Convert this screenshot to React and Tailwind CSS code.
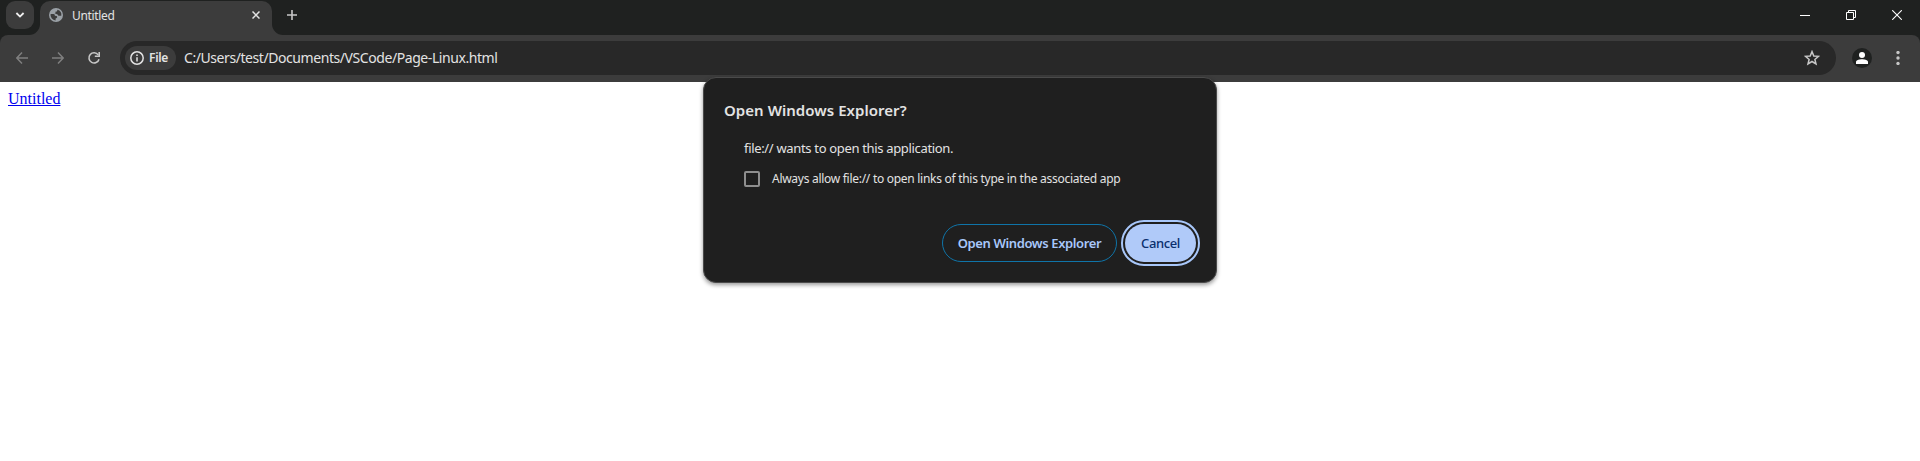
import React from "react";

function GlobeIcon() {
  return (
    <svg className="h-[14px] w-[14px] shrink-0" viewBox="0 0 14 14">
      <circle cx="7" cy="7" r="7" fill="#9aa0a6" />
      <path
        d="M1.6 6 L4.4 6 C5.6 6 6 6.8 5.8 7.8 L7.4 8 C8.4 8.2 8.4 9.6 7.6 10 L6.6 10.6 V12.4 A5.4 5.4 0 0 1 1.6 6 Z M8.4 1.8 L8 3.4 H6.6 V4.6 L5.6 5.2 L8.6 6.4 L9.4 7.8 H12.3 A5.4 5.4 0 0 0 8.4 1.8 Z"
        fill="#3c3c3c"
      />
    </svg>
  );
}

function TabStrip() {
  return (
    <div className="flex h-[35px] items-start bg-[#1f2120]">
      <button className="ml-[6px] mt-px flex h-7 w-7 items-center justify-center rounded-[9px] bg-[#3c3c3c]">
        <svg className="h-2 w-[10px]" viewBox="0 0 10 8" fill="none" stroke="#f0f0f0" strokeWidth="1.8">
          <path d="M1.4 2 L5 5.6 L8.6 2" />
        </svg>
      </button>
      <div className="mt-px flex h-[34px]">
        <svg className="h-[34px] w-[6px] overflow-visible" viewBox="0 0 6 34">
          <path d="M6 23 V34 H-5 A11 11 0 0 0 6 23 Z" fill="#3c3c3c" />
        </svg>
        <div className="flex w-[232px] items-start rounded-t-[10px] bg-[#3c3c3c] pl-[9px] pr-3 pt-[7px]">
          <GlobeIcon />
          <span className="ml-[9px] flex-1 text-[12px] leading-[16px] tracking-[-0.33px] text-[#e3e3e3]">Untitled</span>
          <svg className="mt-[3px] h-2 w-2" viewBox="0 0 8 8" stroke="#e3e3e3" strokeWidth="1.5">
            <path d="M0.5 0.5 L7.5 7.5 M7.5 0.5 L0.5 7.5" />
          </svg>
        </div>
        <svg className="h-[34px] w-[11px]" viewBox="0 0 11 34">
          <path d="M0 23 V34 H11 A11 11 0 0 1 0 23 Z" fill="#3c3c3c" />
        </svg>
      </div>
      <svg className="ml-1 mt-[10px] h-[10px] w-[10px]" viewBox="0 0 10 10" stroke="#c7c7c7" strokeWidth="1.6">
        <path d="M5 0 V10 M0 5 H10" />
      </svg>
      <div className="ml-auto mr-[18px] mt-[10px] flex gap-9">
        <svg className="h-[10px] w-[10px]" viewBox="0 0 10 10" fill="#fff">
          <rect y="5" width="10" height="1" />
        </svg>
        <svg className="h-[10px] w-[10px]" viewBox="0 0 10 10" fill="none" stroke="#fff">
          <path d="M0.5 2.5 H7.5 V9.5 H0.5 Z M2.5 2.5 V0.5 H9.5 V7.5 H7.5" />
        </svg>
        <svg className="h-[10px] w-[10px]" viewBox="0 0 10 10" stroke="#fff" strokeWidth="1.1">
          <path d="M0.2 0.2 L9.8 9.8 M9.8 0.2 L0.2 9.8" />
        </svg>
      </div>
    </div>
  );
}

function Toolbar() {
  return (
    <div className="bg-[#1f2120]">
      <div className="flex h-[47px] items-center rounded-t-[8px] bg-[#3c3c3c] pb-px pl-4 pr-5">
        <svg className="h-3 w-3" viewBox="0 0 12 12" fill="none" stroke="#7f7f7f" strokeWidth="1.5">
          <path d="M12 6 H1 M6 0.6 L0.8 6 L6 11.4" />
        </svg>
        <svg className="ml-6 h-3 w-3" viewBox="0 0 12 12" fill="none" stroke="#7f7f7f" strokeWidth="1.5">
          <path d="M0 6 H11 M6 0.6 L11.2 6 L6 11.4" />
        </svg>
        <svg className="ml-6 h-3 w-3 overflow-visible" viewBox="0 0 12 12" fill="none" stroke="#c7c7c7" strokeWidth="1.6">
          <path d="M10.2 2.9 A5.1 5.1 0 1 0 11 7.2" />
          <path d="M11.2 0 V4.3 H6.8" />
        </svg>
        <div className="ml-5 flex h-[34px] flex-1 items-center rounded-full bg-[#282828] pl-[5px] pr-4">
          <div className="flex h-6 w-[51px] items-center rounded-full bg-[#3c3c3c] pl-[5px]">
            <svg className="h-[14px] w-[14px] shrink-0" viewBox="0 0 14 14" fill="none" stroke="#e3e3e3" strokeWidth="1.5">
              <circle cx="7" cy="7" r="6.2" />
              <path d="M7 6.2 V10.4 M7 3.4 V4.9" />
            </svg>
            <span className="ml-[5px] text-[12px] leading-[16px] font-semibold tracking-[-0.3px] text-[#e3e3e3]">File</span>
          </div>
          <span className="ml-2 flex-1 text-[14px] leading-[20px] tracking-[-0.43px] text-[#e3e3e3]">
            C:/Users/test/Documents/VSCode/Page-Linux.html
          </span>
          <svg className="h-4 w-4" viewBox="0 0 16 16" fill="none" stroke="#c7c7c7" strokeWidth="1.5">
            <path d="M8 1.6 L9.8 6 L14.5 6.3 L10.9 9.4 L12 14 L8 11.5 L4 14 L5.1 9.4 L1.5 6.3 L6.2 6 Z" />
          </svg>
        </div>
        <div className="ml-4 flex h-5 w-5 items-center justify-center rounded-full bg-[#1f2120]">
          <svg className="h-3 w-3" viewBox="0 0 12 12" fill="#fff">
            <circle cx="6" cy="3" r="3" />
            <path d="M0 12 V10 C0 8 3.4 7.2 6 7.2 C8.6 7.2 12 8 12 10 V12 Z" />
          </svg>
        </div>
        <svg className="ml-6 h-[14px] w-1" viewBox="0 0 4 14" fill="#c7c7c7">
          <circle cx="2" cy="1.6" r="1.7" />
          <circle cx="2" cy="7" r="1.7" />
          <circle cx="2" cy="12.4" r="1.7" />
        </svg>
      </div>
    </div>
  );
}

function Dialog() {
  return (
    <div className="absolute left-[703px] top-[77px] flex h-[206px] w-[514px] flex-col rounded-[13px] border border-[#4a4a4a] bg-[#1f1f1f] text-[#e3e3e3] shadow-[0_2px_4px_rgba(0,0,0,0.4)]">
      <h1 className="ml-5 mt-[21px] text-[15px] leading-[22px] font-semibold tracking-[0.04px]">Open Windows Explorer?</h1>
      <p className="ml-10 mt-[17px] text-[13px] leading-[20px] tracking-[-0.33px]">file:// wants to open this application.</p>
      <label className="ml-10 mt-[11px] flex h-5 items-center">
        <span className="h-4 w-4 rounded-[2px] border-2 border-[#8e8e8e]" />
        <span className="ml-3 text-[12px] leading-[16px] tracking-[-0.28px]">
          Always allow file:// to open links of this type in the associated app
        </span>
      </label>
      <div className="mr-5 mt-[35px] flex justify-end gap-2">
        <button className="h-[38px] w-[175px] rounded-full border border-[#0f74a8] pt-px text-[13px] font-semibold tracking-[-0.38px] text-[#a8c7fa]">
          Open Windows Explorer
        </button>
        <button className="h-[38px] w-[71px] rounded-full bg-[#b0caf9] pt-px text-[13px] font-medium tracking-[-0.4px] text-[#0a2f6e] outline-2 outline-offset-2 outline-[#a8c7fa]">
          Cancel
        </button>
      </div>
    </div>
  );
}

export default function App() {
  return (
    <div className="relative h-[461px] w-[1920px] overflow-hidden bg-white font-['Noto_Sans','Open_Sans',sans-serif]">
      <TabStrip />
      <Toolbar />
      <main className="p-2">
        <a href="#" className="block w-fit font-['Liberation_Serif',serif] text-[16px] leading-[18px] text-[#0000ee] underline">
          Untitled
        </a>
      </main>
      <Dialog />
    </div>
  );
}
